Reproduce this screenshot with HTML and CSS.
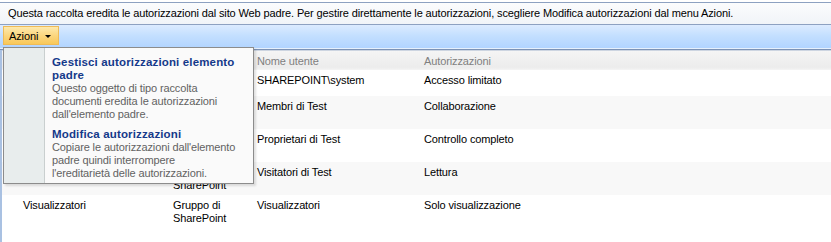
FILE: index.html
```html
<!DOCTYPE html>
<html lang="it">
<head>
    <meta charset="UTF-8">
    <title>Autorizzazioni</title>
    <link rel="stylesheet" href="styles.css">
</head>
<body>
    <div class="infobar">Questa raccolta eredita le autorizzazioni dal sito Web padre. Per gestire direttamente le autorizzazioni, scegliere Modifica autorizzazioni dal menu Azioni.</div>
    <div class="page">
        <div class="toolbar">
            <button class="actions-btn">Azioni <span class="arrow"></span></button>
        </div>

        <!-- open Azioni dropdown, drawn over the list -->
        <div class="menu">
            <div class="menu-icons"></div>
            <div class="menu-items">
                <div class="menu-item">
                    <div class="menu-title">Gestisci autorizzazioni elemento padre</div>
                    <div class="menu-desc">Questo oggetto di tipo raccolta<br>documenti eredita le autorizzazioni<br>dall'elemento padre.</div>
                </div>
                <div class="menu-item">
                    <div class="menu-title">Modifica autorizzazioni</div>
                    <div class="menu-desc">Copiare le autorizzazioni dall'elemento<br>padre quindi interrompere<br>l'ereditarietà delle autorizzazioni.</div>
                </div>
            </div>
        </div>

        <table class="perms">
            <colgroup>
                <col class="c-name">
                <col class="c-type">
                <col class="c-user">
                <col>
            </colgroup>
            <thead>
                <tr>
                    <th></th>
                    <th></th>
                    <th>Nome utente</th>
                    <th>Autorizzazioni</th>
                </tr>
            </thead>
            <tbody>
                <tr class="short">
                    <td></td>
                    <td></td>
                    <td>SHAREPOINT\system</td>
                    <td>Accesso limitato</td>
                </tr>
                <tr>
                    <td></td>
                    <td></td>
                    <td>Membri di Test</td>
                    <td>Collaborazione</td>
                </tr>
                <tr>
                    <td></td>
                    <td></td>
                    <td>Proprietari di Test</td>
                    <td>Controllo completo</td>
                </tr>
                <tr>
                    <td></td>
                    <td>Gruppo di SharePoint</td>
                    <td>Visitatori di Test</td>
                    <td>Lettura</td>
                </tr>
                <tr>
                    <td>Visualizzatori</td>
                    <td>Gruppo di SharePoint</td>
                    <td>Visualizzatori</td>
                    <td>Solo visualizzazione</td>
                </tr>
            </tbody>
        </table>
    </div>
</body>
</html>
```

FILE: styles.css
```css
body {
    font-family: Tahoma, 'Liberation Sans', Arial, sans-serif;
    font-size: 11px;
    letter-spacing: -0.12px;
    color: #000;
    background-color: #fff;
    margin: 0;
    padding: 2px 0 0 0;
    height: 240px;
    overflow: hidden;
}
.infobar {
    height: 21px;
    line-height: 21px;
    padding-left: 8px;
    border-top: 1px solid #8da1c1;
    border-bottom: 1px solid #8da1c1;
    background: linear-gradient(#fbfcfd, #f1f4f8);
    white-space: nowrap;
}
.page {
    position: relative;
    border-left: 2px solid #a9c1e2;
    height: 220px;
}
.toolbar {
    height: 24px;
    background: linear-gradient(#dcebff, #c3dfff 45%, #b0d3ff);
    box-shadow: inset 0 -1px 0 #e6f0fc;
    border-bottom: 1px solid #7c92b5;
    margin-left: -2px;
}
.actions-btn {
    margin: 1px 0 0 3px;
    height: 19px;
    width: 56px;
    padding: 0 0 0 5px;
    text-align: left;
    font-family: inherit;
    font-size: 11px;
    letter-spacing: inherit;
    color: #000;
    border: 1px solid #efbb57;
    background: linear-gradient(#fde9ac, #fbd67f 50%, #f8c85a);
    cursor: pointer;
}
.actions-btn .arrow {
    display: inline-block;
    width: 0;
    height: 0;
    margin-left: 4px;
    vertical-align: 2px;
    border-left: 3px solid transparent;
    border-right: 3px solid transparent;
    border-top: 3px solid #000;
}
.menu {
    position: absolute;
    top: 22px;
    left: 1px;
    width: 249px;
    height: 135px;
    display: flex;
    border: 1px solid #8c8c8c;
    background-color: #fafafa;
    box-shadow: 2px 2px 2px rgba(0, 0, 0, 0.12);
    z-index: 2;
}
.menu-icons {
    width: 40px;
    background-color: #e8eded;
    border-right: 1px solid #c9cfcf;
}
.menu-items {
    padding: 8px 0 0 7px;
}
.menu-item {
    margin-bottom: 7px;
}
.menu-title {
    width: 192px;
    font-size: 11.5px;
    font-weight: bold;
    letter-spacing: 0.15px;
    color: #15398a;
    line-height: 13px;
}
.menu-desc {
    white-space: nowrap;
    color: #626262;
    line-height: 13px;
}
.perms {
    width: 100%;
    border-collapse: collapse;
    border-top: 1px solid #cdd5e1;
}
.c-name {
    width: 171px;
}
.c-type {
    width: 84px;
}
.c-user {
    width: 167px;
}
.perms th {
    height: 19px;
    padding: 0;
    text-align: left;
    font-weight: normal;
    color: #7f7f7f;
    background: linear-gradient(#f4f4f4, #ececec 85%, #f6f6f6);
}
.perms th:first-child,
.perms td:first-child {
    padding-left: 21px;
}
.perms td {
    height: 33px;
    padding: 4px 0 0 0;
    vertical-align: top;
    line-height: 13px;
    box-sizing: border-box;
}
.perms td:nth-child(2) {
    padding-right: 10px;
}
.perms tr.short td {
    height: 26px;
}
.perms tbody tr:nth-child(even) {
    background-color: #f8f8f8;
}
```
